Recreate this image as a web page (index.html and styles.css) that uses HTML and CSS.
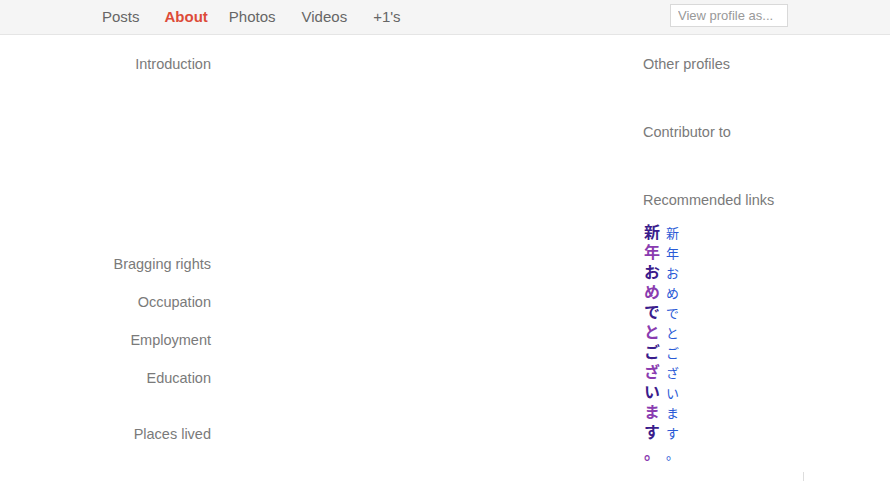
FILE: index.html
```html
<!DOCTYPE html>
<html>
<head>
<meta charset="utf-8">
<link rel="stylesheet" href="styles.css">
</head>
<body>
<header class="nav">
  <nav class="tabs">
    <a class="tab first">Posts</a>
    <a class="tab active">About</a>
    <a class="tab">Photos</a>
    <a class="tab">Videos</a>
    <a class="tab">+1's</a>
  </nav>
  <input class="viewas" type="text" placeholder="View profile as...">
</header>
<main class="main">
  <section class="left">
    <div class="row intro"><div class="label">Introduction</div></div>
    <div class="row"><div class="label">Bragging rights</div></div>
    <div class="row"><div class="label">Occupation</div></div>
    <div class="row"><div class="label">Employment</div></div>
    <div class="row edu"><div class="label">Education</div></div>
    <div class="row"><div class="label">Places lived</div></div>
  </section>
  <aside class="right">
    <div class="side">Other profiles</div>
    <div class="side">Contributor to</div>
    <div class="side rec">Recommended links</div>
    <div class="links">
      <a class="col bold"><span class="d">新</span><span class="p">年</span><span class="d">お</span><span class="p">め</span><span class="d">で</span><span class="p">と</span><span class="d">ご</span><span class="p">ざ</span><span class="d">い</span><span class="p">ま</span><span class="d">す</span><span class="p h">。</span></a>
      <a class="col thin">新年おめでとございます<span class="h">。</span></a>
    </div>
  </aside>
</main>
<div class="tick"></div>
</body>
</html>
```
FILE: styles.css
```css
* { box-sizing: border-box; }
html, body { margin: 0; padding: 0; background: #fff; }
body {
  font-family: "Liberation Sans", Arial, sans-serif;
  position: relative;
  height: 481px;
  overflow: hidden;
}
.nav {
  height: 35px;
  background: #f5f5f5;
  border-bottom: 1px solid #e5e5e5;
  display: flex;
  align-items: flex-start;
  justify-content: space-between;
  padding: 0 102px 0 102px;
}
.tabs {
  display: flex;
  gap: 26px;
  padding-top: 8px;
}
.tab {
  font-size: 15px;
  line-height: 18px;
  color: #666;
}
.tab.first { margin-right: -1px; }
.tab.active { color: #dd4b39; font-weight: bold; margin-right: -5px; }
.viewas {
  margin-top: 4px;
  width: 118px;
  height: 23px;
  border: 1px solid #d9d9d9;
  background: #fff;
  padding: 0 7px;
  font-family: "Liberation Sans", Arial, sans-serif;
  font-size: 13px;
  color: #999;
  outline: none;
}
.viewas::placeholder { color: #999; }
.main {
  display: flex;
  padding-top: 20px;
}
.left { width: 643px; }
.row { height: 38px; }
.row.intro { height: 200px; }
.row.edu { height: 56px; }
.label {
  width: 211px;
  text-align: right;
  font-size: 14.5px;
  line-height: 18px;
  color: #7a7a7a;
}
.right { width: 200px; }
.side {
  height: 68px;
  font-size: 14.5px;
  line-height: 18px;
  color: #7a7a7a;
}
.side.rec { height: 31px; }
.links { display: flex; align-items: flex-start; gap: 5px; }
.col {
  display: block;
  writing-mode: vertical-rl;
  text-orientation: upright;
  font-family: "Noto Sans CJK JP", sans-serif;
  white-space: nowrap;
}
.col .h { text-combine-upright: all; }
.bold {
  width: 17px;
  line-height: 17px;
  font-weight: bold;
  font-size: 16px;
  letter-spacing: 4px;
  padding-top: 2px;
}
.bold .d { color: #3a1c8c; }
.bold .p { color: #8a3cb0; }
.thin {
  width: 14px;
  line-height: 14px;
  font-size: 13px;
  letter-spacing: 7px;
  color: #2a5ad6;
  padding-top: 5px;
}
.tick {
  position: absolute;
  left: 803px;
  top: 472px;
  width: 1px;
  height: 9px;
  background: #ddd;
}
```
